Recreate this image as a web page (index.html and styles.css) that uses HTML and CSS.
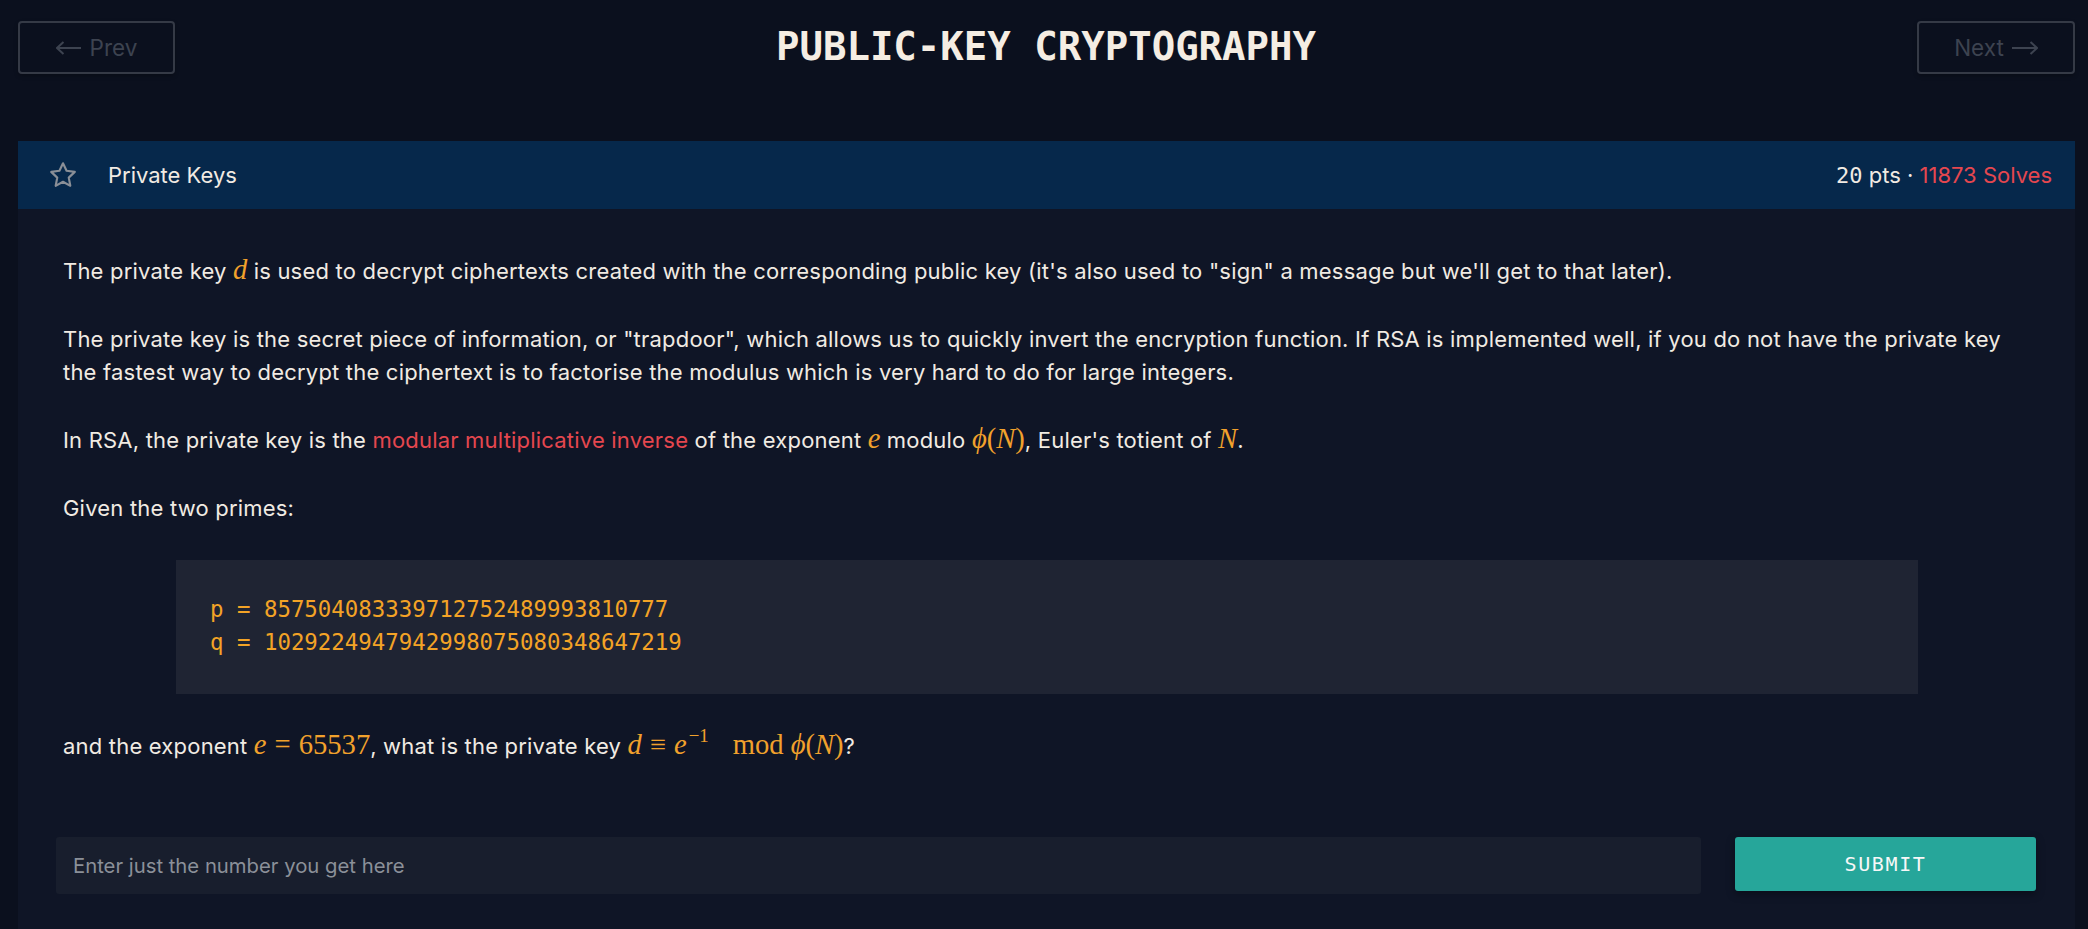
FILE: index.html
```html
<!DOCTYPE html>
<html lang="en">
<head>
<meta charset="utf-8">
<title>Public-Key Cryptography</title>
<link rel="stylesheet" href="styles.css">
</head>
<body>
<div class="page">
  <nav class="topnav">
    <a class="navbtn">
      <svg class="arrow" viewBox="0 0 26 14" width="26" height="14"><path d="M1 7H25M7.5 1L1 7l6.5 6" fill="none" stroke="currentColor" stroke-width="2"/></svg>
      <span>Prev</span>
    </a>
    <h1 class="title">PUBLIC-KEY CRYPTOGRAPHY</h1>
    <a class="navbtn">
      <span>Next</span>
      <svg class="arrow" viewBox="0 0 26 14" width="26" height="14"><path d="M0 7H24M18.5 1L25 7l-6.5 6" fill="none" stroke="currentColor" stroke-width="2"/></svg>
    </a>
  </nav>

  <section class="card">
    <header class="chal-head">
      <div class="chal-name">
        <svg class="star" viewBox="0 0 24 24" width="30" height="30"><path d="M12 2.6l2.85 6.05 6.6.85-4.85 4.6 1.25 6.55L12 17.4l-5.85 3.25 1.25-6.55-4.85-4.6 6.6-.85z" fill="none" stroke="currentColor" stroke-width="1.7" stroke-linejoin="round"/></svg>
        <span>Private Keys</span>
      </div>
      <div class="chal-meta"><span class="mono">20</span> pts · <span class="solves">11873 Solves</span></div>
    </header>

    <div class="chal-body">
      <p>The private key <span class="m">d</span> is used to decrypt ciphertexts created with the corresponding public key (it's also used to "sign" a message but we'll get to that later).</p>
      <p>The private key is the secret piece of information, or "trapdoor", which allows us to quickly invert the encryption function. If RSA is implemented well, if you do not have the private key the fastest way to decrypt the ciphertext is to factorise the modulus which is very hard to do for large integers.</p>
      <p>In RSA, the private key is the <a class="link">modular multiplicative inverse</a> of the exponent <span class="m">e</span> modulo <span class="m">ϕ<span class="mr">(</span>N<span class="mr">)</span></span>, Euler's totient of <span class="m">N</span>.</p>
      <p>Given the two primes:</p>
      <pre class="code">p = 857504083339712752489993810777
q = 1029224947942998075080348647219</pre>
      <p>and the exponent <span class="m">e<span class="mr rel">=</span><span class="mr">65537</span></span>, what is the private key <span class="m">d<span class="mr rel">≡</span>e<sup class="sup mr">−1</sup><span class="mr modop">mod</span>ϕ<span class="mr">(</span>N<span class="mr">)</span></span>?</p>
    </div>

    <form class="flag-form">
      <input class="flag-input" type="text" placeholder="Enter just the number you get here">
      <button class="submit" type="button">SUBMIT</button>
    </form>
  </section>
</div>
</body>
</html>
```

FILE: styles.css
```css
* { box-sizing: border-box; }

html, body {
  margin: 0;
  background: #0b101e;
  height: 100%;
}

body {
  font-family: "Inter", "Noto Sans", sans-serif;
  color: #f1ebe3;
  overflow: hidden;
}

.page {
  padding: 21px 13px 0 18px;
}

.topnav {
  display: grid;
  grid-template-columns: 157px 1fr 158px;
  align-items: center;
  height: 53px;
}

.navbtn {
  display: flex;
  align-items: center;
  justify-content: center;
  gap: 8px;
  height: 53px;
  border: 2px solid #353a46;
  border-radius: 4px;
  color: #3d4350;
  font-size: 22.5px;
  box-shadow: 0 2px 4px rgba(0, 0, 0, 0.25);
}

.arrow { display: block; }

.title {
  margin: 0;
  text-align: center;
  font-family: "DejaVu Sans Mono", monospace;
  font-weight: 700;
  font-size: 39px;
  color: #f5ede3;
  line-height: 53px;
  position: relative;
  top: -1px;
}

.card {
  margin-top: 67px;
  background: #0f1526;
  min-height: 800px;
}

.chal-head {
  display: flex;
  align-items: center;
  justify-content: space-between;
  height: 68px;
  padding: 0 23px 0 30px;
  background: #06284b;
}

.chal-name {
  display: flex;
  align-items: center;
  gap: 30px;
  font-size: 22px;
}

.star {
  color: #8a8f97;
  display: block;
}

.chal-meta {
  font-size: 22px;
}

.mono {
  font-family: "DejaVu Sans Mono", monospace;
  font-size: 22px;
}

.solves { color: #e5474f; }

.chal-body {
  padding: 46px 45px 0 45px;
  font-size: 22px;
  letter-spacing: 0.2px;
  line-height: 33px;
}

.chal-body p {
  margin: 0 0 35px;
}

.chal-body p:last-child { margin-bottom: 0; }

.link {
  color: #e5474f;
  text-decoration: none;
}

.m {
  font-family: "Liberation Serif", "DejaVu Serif", serif;
  font-style: italic;
  font-size: 1.3em;
  letter-spacing: 0;
  color: #f1a12c;
  line-height: 0;
}

.mr { font-style: normal; }

.rel { margin: 0 8px; }

.sup {
  font-size: 0.66em;
  vertical-align: 0.62em;
  line-height: 0;
  margin-left: 2px;
}

.modop {
  margin: 0 7px 0 24px;
}

.code {
  margin: 0 112px 36px 113px;
  padding: 33px 34px 35px;
  background: #1f2433;
  font-family: "DejaVu Sans Mono", monospace;
  font-size: 22.4px;
  letter-spacing: 0;
  line-height: 33px;
  color: #f3a326;
}

.flag-form {
  display: flex;
  align-items: flex-start;
  gap: 34px;
  margin-top: 74px;
  padding: 0 39px 0 38px;
}

.flag-input {
  flex: 1;
  height: 57px;
  border: none;
  border-radius: 3px;
  background: #181e2d;
  padding: 0 17px;
  font-family: "Inter", sans-serif;
  font-size: 20.3px;
  color: #f1ebe3;
  outline: none;
}

.flag-input::placeholder { color: #8b9099; }

.submit {
  width: 301px;
  height: 54px;
  border: none;
  border-radius: 3px;
  background: #26a69a;
  color: #f7f7f7;
  font-family: "DejaVu Sans Mono", monospace;
  font-size: 20px;
  letter-spacing: 1.6px;
  box-shadow: 0 3px 8px rgba(0, 0, 0, 0.35);
}
```
